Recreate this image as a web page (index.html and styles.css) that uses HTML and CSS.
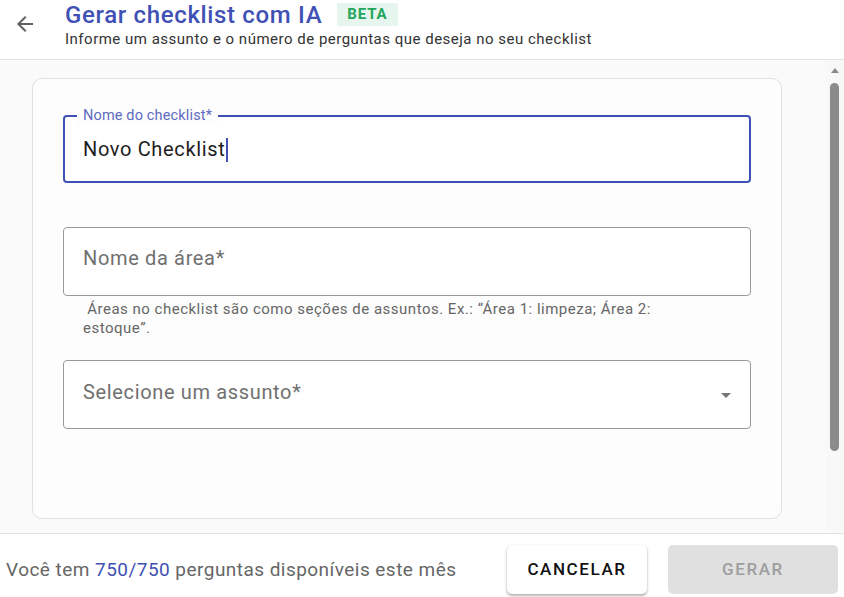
FILE: index.html
```html
<!DOCTYPE html>
<html lang="pt-BR">
<head>
<meta charset="utf-8">
<title>Gerar checklist com IA</title>
<link rel="stylesheet" href="styles.css">
</head>
<body>
<div class="page">
  <header class="header">
    <button class="back" aria-label="Voltar">
      <svg width="24" height="24" viewBox="0 0 24 24"><path d="M20 11H7.83l5.59-5.59L12 4l-8 8 8 8 1.41-1.41L7.83 13H20v-2z" fill="#616161"/></svg>
    </button>
    <div class="titles">
      <div class="title-row">
        <h1 class="title">Gerar checklist com IA</h1>
        <span class="badge">BETA</span>
      </div>
      <p class="subtitle">Informe um assunto e o número de perguntas que deseja no seu checklist</p>
    </div>
  </header>
  <div class="body">
    <main class="content">
      <section class="card">
        <div class="field focused">
          <span class="label">Nome do checklist*</span>
          <span class="value">Novo Checklist</span><span class="caret"></span>
        </div>
        <div class="group">
          <div class="field">
            <span class="placeholder">Nome da área*</span>
          </div>
          <p class="helper">&nbsp;Áreas no checklist são como seções de assuntos. Ex.: “Área 1: limpeza; Área 2: estoque”.</p>
        </div>
        <div class="field select">
          <span class="placeholder">Selecione um assunto*</span>
          <svg class="arrow" width="24" height="24" viewBox="0 0 24 24"><path d="M7 10l5 5 5-5z" fill="#757575"/></svg>
        </div>
      </section>
    </main>
    <div class="scrollbar">
      <span class="sb-up"></span>
      <span class="sb-thumb"></span>
    </div>
  </div>
  <footer class="footer">
    <p class="quota">Você tem <span class="num">750/750</span> perguntas disponíveis este mês</p>
    <div class="actions">
      <button class="btn cancel">CANCELAR</button>
      <button class="btn generate" disabled>GERAR</button>
    </div>
  </footer>
</div>
</body>
</html>
```
FILE: styles.css
```css
* { box-sizing: border-box; }
html, body { margin: 0; padding: 0; }
body {
  font-family: Roboto, "Noto Sans", Arial, sans-serif;
  width: 844px;
  height: 597px;
  overflow: hidden;
  background: #fff;
  color: #212121;
}
.page { display: flex; flex-direction: column; height: 597px; }

.header {
  height: 60px;
  display: flex;
  align-items: flex-start;
  border-bottom: 1px solid #e3e3e3;
  background: #fff;
}
.back {
  border: 0; background: none; padding: 0;
  margin: 12px 0 0 13px;
  width: 24px; height: 24px;
  display: flex;
}
.titles { margin-left: 28px; }
.title-row { display: flex; align-items: center; height: 28px; margin-top: 1px; }
.title {
  margin: 0;
  font-size: 24px;
  font-weight: 500;
  color: #3f51b5;
  line-height: 28px;
  letter-spacing: 0.65px;
}
.badge {
  margin-left: 15px;
  background: #e6f6ee;
  color: #22a65c;
  font-size: 15px;
  font-weight: 700;
  letter-spacing: 0.9px;
  padding: 0 10px;
  height: 23px;
  line-height: 23px;
  margin-top: -1px;
}
.subtitle {
  margin: 2px 0 0;
  font-size: 15px;
  line-height: 17px;
  color: #333;
  letter-spacing: 0.5px;
}

.body { flex: 1; display: flex; background: #fafafa; min-height: 0; }
.content { flex: 1; padding: 18px 0 0 32px; }
.card {
  width: 750px;
  height: 441px;
  background: #fdfdfd;
  border: 1px solid #e2e2e2;
  border-radius: 10px;
  padding: 36px 30px 0 30px;
  display: flex;
  flex-direction: column;
}
.group { display: flex; flex-direction: column; margin: 44px 0 22px; }
.field {
  position: relative;
  height: 69px;
  border: 1px solid #9a9a9a;
  border-radius: 4px;
  background: #fff;
  display: flex;
  align-items: center;
  padding: 0 19px;
  font-size: 20px;
  letter-spacing: 0.65px;
}
.field.focused {
  border: 2px solid #3f51b5;
  height: 68px;
  padding: 0 18px;
}
.label {
  position: absolute;
  top: -10px;
  left: 12px;
  padding: 0 6px;
  background: #fdfdfd;
  font-size: 14.5px;
  line-height: 18px;
  color: #5c6bc0;
  letter-spacing: 0.15px;
}
.value { color: #1d1d1d; }
.caret { display: inline-block; width: 1.5px; height: 24px; background: #3f51b5; margin-left: 1px; margin-top: 2px; }
.placeholder { color: #707070; margin-top: -7px; }
.select { justify-content: space-between; padding-right: 12px; }
.select .placeholder { margin-top: -6px; }
.helper {
  margin: 4px 0 0 20px;
  font-size: 15px;
  line-height: 19px;
  color: #666;
  letter-spacing: 0.5px;
  width: 600px;
}

.scrollbar {
  width: 17px;
  margin-right: 1px;
  display: flex;
  flex-direction: column;
  align-items: center;
  background: #f8f8f8;
}
.sb-up {
  width: 0; height: 0;
  border-left: 4px solid transparent;
  border-right: 4px solid transparent;
  border-bottom: 5px solid #8a8a8a;
  margin-top: 8px;
}
.sb-thumb {
  width: 9px;
  height: 368px;
  margin-top: 10px;
  background: #8b8b8b;
  border-radius: 5px;
}

.footer {
  height: 64px;
  border-top: 1px solid #e3e3e3;
  background: #fff;
  display: flex;
  align-items: center;
  justify-content: space-between;
  padding-top: 7px;
}
.quota {
  margin: 0 0 0 6px;
  font-size: 19px;
  color: #666;
  letter-spacing: 0.46px;
}
.num { color: #3f51b5; }
.actions { display: flex; gap: 21px; margin-right: 6px; }
.btn {
  height: 49px;
  border: 0;
  border-radius: 5px;
  font-family: Roboto, "Noto Sans", Arial, sans-serif;
  font-size: 17px;
  font-weight: 500;
  letter-spacing: 1.6px;
}
.cancel {
  width: 140px;
  background: #fff;
  color: #111;
  box-shadow: 0 2px 3px rgba(0,0,0,0.3), 0 0 1px rgba(0,0,0,0.15);
}
.generate {
  width: 170px;
  background: #e0e0e0;
  color: #9e9e9e;
}
```
